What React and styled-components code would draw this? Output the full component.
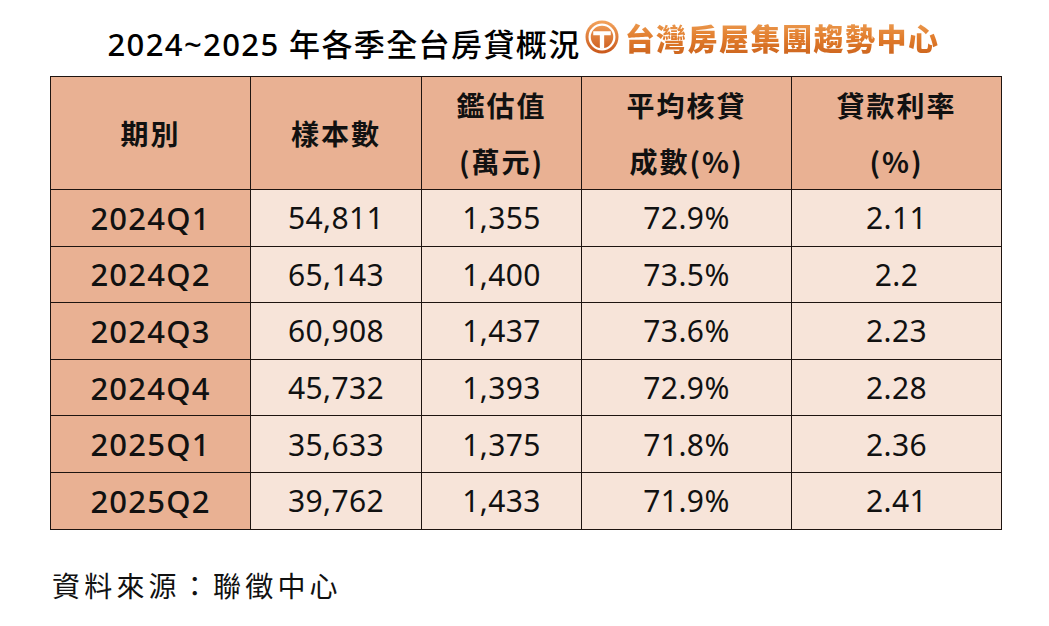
import React from 'react';
import styled, { createGlobalStyle } from 'styled-components';

const GlobalStyle = createGlobalStyle`
  body {
    margin: 0;
    background: #ffffff;
    font-family: "Noto Sans", "Noto Sans CJK TC", sans-serif;
    color: #111;
  }
`;

const rows = [
  ['2024Q1', '54,811', '1,355', '72.9%', '2.11'],
  ['2024Q2', '65,143', '1,400', '73.5%', '2.2'],
  ['2024Q3', '60,908', '1,437', '73.6%', '2.23'],
  ['2024Q4', '45,732', '1,393', '72.9%', '2.28'],
  ['2025Q1', '35,633', '1,375', '71.8%', '2.36'],
  ['2025Q2', '39,762', '1,433', '71.9%', '2.41'],
];

const headers = [
  ['期別'],
  ['樣本數'],
  ['鑑估值', '(萬元)'],
  ['平均核貸', '成數(%)'],
  ['貸款利率', '(%)'],
];

const colWidths = [200, 171, 160, 210, 210];

const LogoMark = () => (
  <svg width="34" height="34" viewBox="0 0 33 33">
    <defs>
      <linearGradient id="lg" x1="0" y1="0" x2="0" y2="1">
        <stop offset="0" stopColor="#f3a35c" />
        <stop offset="1" stopColor="#c9571a" />
      </linearGradient>
    </defs>
    <circle cx="16.5" cy="16.5" r="16" fill="url(#lg)" />
    <circle cx="16.5" cy="16.5" r="12" fill="none" stroke="#fff" strokeWidth="2.2" />
    <path d="M8 11h17v3.8h-6.4v13h-4.2v-13H8z" fill="#fff" />
  </svg>
);

const App = () => {
  return (
    <>
      <GlobalStyle />
      <Page>
        <TitleRow>
          <Title>2024~2025 年各季全台房貸概況</Title>
          <Logo>
            <LogoMark />
            <LogoText>台灣房屋集團趨勢中心</LogoText>
          </Logo>
        </TitleRow>

        <Table>
          <colgroup>
            {colWidths.map((w, i) => (
              <col key={i} style={{ width: w }} />
            ))}
          </colgroup>
          <thead>
            <tr>
              {headers.map((h, i) => (
                <HeadCell key={i}>
                  {h.map((line, j) => (
                    <HeadLine key={j}>{line}</HeadLine>
                  ))}
                </HeadCell>
              ))}
            </tr>
          </thead>
          <tbody>
            {rows.map((r) => (
              <tr key={r[0]}>
                {r.map((v, i) => (
                  <Cell key={i} $label={i === 0}>{v}</Cell>
                ))}
              </tr>
            ))}
          </tbody>
        </Table>

        <Source>資料來源：聯徵中心</Source>
      </Page>
    </>
  );
};

const Page = styled.div`
  width: 951px;
  margin-left: 50px;
  padding-top: 16px;
`;

const TitleRow = styled.div`
  height: 52px;
  margin-bottom: 8px;
  display: flex;
  align-items: center;
  justify-content: center;
  margin-left: -4px;
`;

const Title = styled.h1`
  margin: 0;
  font-family: "Noto Sans", "Noto Sans CJK TC", sans-serif;
  font-size: 31px;
  font-weight: 500;
  letter-spacing: 1.4px;
  color: #000;
  white-space: nowrap;
`;

const Logo = styled.div`
  display: flex;
  align-items: center;
  gap: 6px;
  margin-left: 4px;
  margin-top: -10px;
`;

const LogoText = styled.span`
  font-family: "Noto Sans CJK TC", sans-serif;
  font-size: 30px;
  font-weight: 900;
  letter-spacing: 1.5px;
  background: linear-gradient(180deg, #f0a75f 0%, #e07a2a 55%, #c8601c 100%);
  -webkit-background-clip: text;
  background-clip: text;
  color: transparent;
  white-space: nowrap;
`;

const Table = styled.table`
  width: 951px;
  border-collapse: collapse;
  table-layout: fixed;
  border: 1px solid #1e1410;
`;

const HeadCell = styled.th`
  height: 111px;
  padding: 0;
  background: #e9b193;
  border: 1px solid #1e1410;
  text-align: center;
  vertical-align: middle;
  font-family: "Noto Sans CJK TC", sans-serif;
  font-size: 28px;
  font-weight: 700;
  letter-spacing: 2px;
  color: #111;
`;

const HeadLine = styled.div`
  line-height: 56px;
`;

const Cell = styled.td`
  height: 55.6px;
  padding: 0;
  text-align: center;
  vertical-align: middle;
  border: 1px solid #1e1410;
  background: ${(p) => (p.$label ? '#e9b193' : '#f7e4d9')};
  font-family: "Noto Sans", "Noto Sans CJK TC", sans-serif;
  font-size: ${(p) => (p.$label ? '31px' : '30px')};
  font-weight: ${(p) => (p.$label ? 500 : 400)};
  letter-spacing: ${(p) => (p.$label ? '1.2px' : '0.4px')};
  color: #111;
`;

const Source = styled.div`
  margin-top: 35px;
  margin-left: 2px;
  font-family: "Noto Sans CJK TC", sans-serif;
  font-size: 28px;
  line-height: 40px;
  letter-spacing: 4.2px;
  color: #111;
`;

export default App;
